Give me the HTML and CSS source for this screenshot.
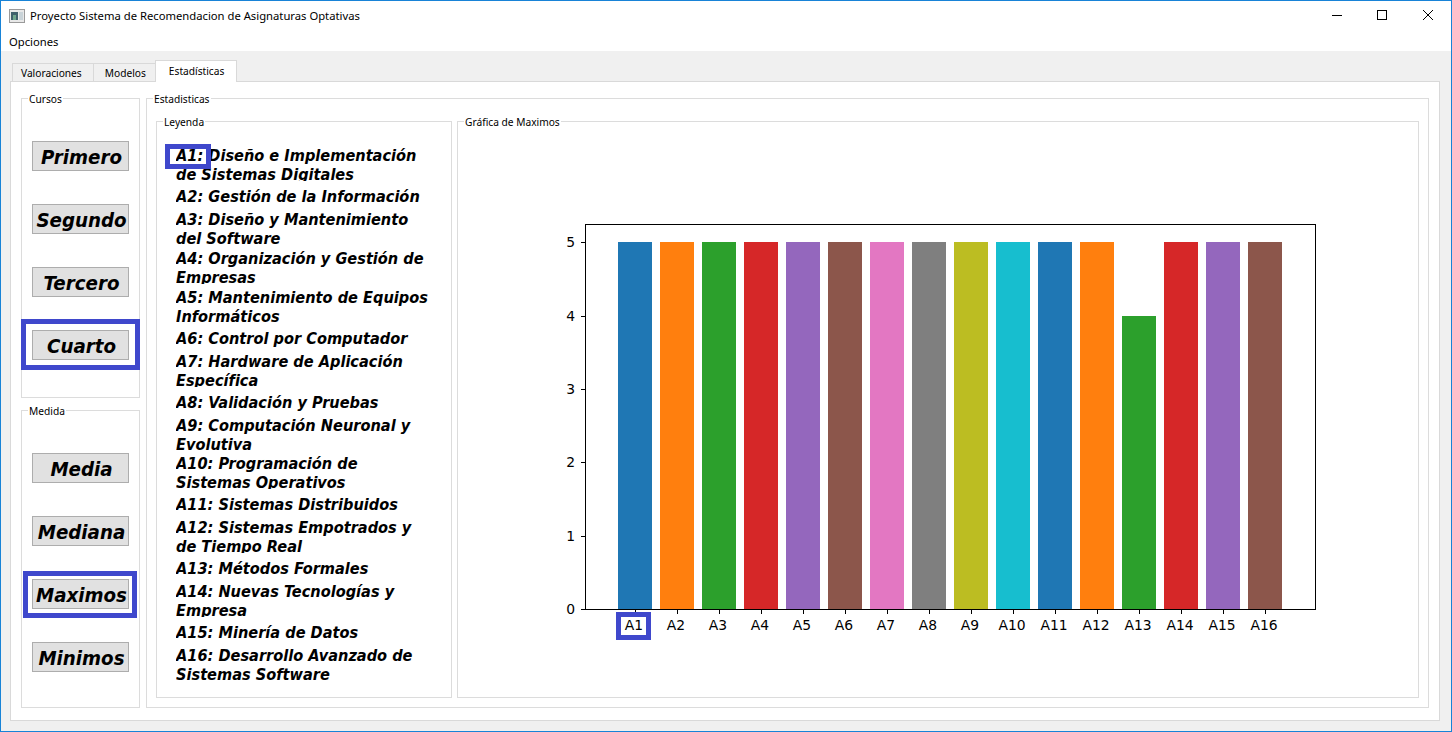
FILE: index.html
```html
<!DOCTYPE html>
<html lang="es">
<head>
  <meta charset="UTF-8">
  <title>Proyecto Sistema de Recomendacion de Asignaturas Optativas</title>
  <link rel="stylesheet" href="styles.css">
</head>
<body>
  <div class="window">
    <div class="titlebar">
      <svg class="app-icon" width="16" height="14" viewBox="0 0 16 14">
        <rect x="0.5" y="0.5" width="15" height="13" fill="#e8e8e8" stroke="#9a9a9a"/>
        <rect x="2" y="3" width="7" height="8" fill="#3f5f6b"/>
        <rect x="4" y="6" width="3" height="5" fill="#6fa58c"/>
        <rect x="10" y="3" width="4" height="8" fill="#c9d3d8"/>
      </svg>
      <span class="title">Proyecto Sistema de Recomendacion de Asignaturas Optativas</span>
      <div class="win-buttons">
        <svg width="10" height="10" viewBox="0 0 10 10"><path d="M0 5.5H10" stroke="#000" fill="none"/></svg>
        <svg width="10" height="10" viewBox="0 0 10 10"><rect x="0.5" y="0.5" width="9" height="9" stroke="#000" fill="none"/></svg>
        <svg class="win-close" width="10" height="10" viewBox="0 0 10 10"><path d="M0 0L10 10M10 0L0 10" stroke="#000" fill="none"/></svg>
      </div>
    </div>
    <div class="menubar">Opciones</div>

    <div class="content">
      <div class="tabs">
        <div class="tab">Valoraciones</div>
        <div class="tab tab-models">Modelos</div>
        <div class="tab active">Estadísticas</div>
      </div>
      <div class="pane">
        <div class="left-col">
          <div class="group btn-group cursos">
            <span class="group-title">Cursos</span>
            <button class="big-btn">Primero</button>
            <button class="big-btn">Segundo</button>
            <button class="big-btn">Tercero</button>
            <button class="big-btn">Cuarto</button>
          </div>
          <div class="group btn-group medida">
            <span class="group-title">Medida</span>
            <button class="big-btn">Media</button>
            <button class="big-btn">Mediana</button>
            <button class="big-btn">Maximos</button>
            <button class="big-btn">Minimos</button>
          </div>
        </div>

        <div class="group stats">
          <span class="group-title">Estadisticas</span>
          <div class="group legend">
            <span class="group-title">Leyenda</span>
            <div class="item two">A1: Diseño e Implementación<br>de Sistemas Digitales</div>
            <div class="item one">A2: Gestión de la Información</div>
            <div class="item two tight">A3: Diseño y Mantenimiento<br>del Software</div>
            <div class="item two tight">A4: Organización y Gestión de<br>Empresas</div>
            <div class="item two">A5: Mantenimiento de Equipos<br>Informáticos</div>
            <div class="item one">A6: Control por Computador</div>
            <div class="item two">A7: Hardware de Aplicación<br>Específica</div>
            <div class="item one">A8: Validación y Pruebas</div>
            <div class="item two tighter">A9: Computación Neuronal y<br>Evolutiva</div>
            <div class="item two">A10: Programación de<br>Sistemas Operativos</div>
            <div class="item one">A11: Sistemas Distribuidos</div>
            <div class="item two">A12: Sistemas Empotrados y<br>de Tiempo Real</div>
            <div class="item one">A13: Métodos Formales</div>
            <div class="item two">A14: Nuevas Tecnologías y<br>Empresa</div>
            <div class="item one">A15: Minería de Datos</div>
            <div class="item two">A16: Desarrollo Avanzado de<br>Sistemas Software</div>
          </div>
          <div class="group chart">
            <span class="group-title">Gráfica de Maximos</span>
            <!-- viewBox in window coordinates, easier to check against the plot -->
            <svg class="plot" viewBox="458 122 960 575" width="960" height="575">
              <g>
                <rect x="618" y="242" width="34" height="367" fill="#1f77b4"/>
                <rect x="660" y="242" width="34" height="367" fill="#ff7f0e"/>
                <rect x="702" y="242" width="34" height="367" fill="#2ca02c"/>
                <rect x="744" y="242" width="34" height="367" fill="#d62728"/>
                <rect x="786" y="242" width="34" height="367" fill="#9467bd"/>
                <rect x="828" y="242" width="34" height="367" fill="#8c564b"/>
                <rect x="870" y="242" width="34" height="367" fill="#e377c2"/>
                <rect x="912" y="242" width="34" height="367" fill="#7f7f7f"/>
                <rect x="954" y="242" width="34" height="367" fill="#bcbd22"/>
                <rect x="996" y="242" width="34" height="367" fill="#17becf"/>
                <rect x="1038" y="242" width="34" height="367" fill="#1f77b4"/>
                <rect x="1080" y="242" width="34" height="367" fill="#ff7f0e"/>
                <rect x="1122" y="316" width="34" height="293" fill="#2ca02c"/>
                <rect x="1164" y="242" width="34" height="367" fill="#d62728"/>
                <rect x="1206" y="242" width="34" height="367" fill="#9467bd"/>
                <rect x="1248" y="242" width="34" height="367" fill="#8c564b"/>
              </g>
              <rect x="585.5" y="224.5" width="730" height="385" fill="none" stroke="#000"/>
              <path class="ticks" d="M581 609.5H585M581 536.5H585M581 462.5H585M581 389.5H585M581 316.5H585M581 242.5H585
                M635.5 610V614M677.5 610V614M719.5 610V614M761.5 610V614M803.5 610V614M845.5 610V614M887.5 610V614M929.5 610V614
                M971.5 610V614M1013.5 610V614M1055.5 610V614M1097.5 610V614M1139.5 610V614M1181.5 610V614M1223.5 610V614M1265.5 610V614"/>
              <g class="y-labels">
                <text x="575" y="614">0</text>
                <text x="575" y="541">1</text>
                <text x="575" y="467">2</text>
                <text x="575" y="394">3</text>
                <text x="575" y="321">4</text>
                <text x="575" y="247">5</text>
              </g>
              <g class="x-labels">
                <text x="634" y="630">A1</text>
                <text x="676" y="630">A2</text>
                <text x="718" y="630">A3</text>
                <text x="760" y="630">A4</text>
                <text x="802" y="630">A5</text>
                <text x="844" y="630">A6</text>
                <text x="886" y="630">A7</text>
                <text x="928" y="630">A8</text>
                <text x="970" y="630">A9</text>
                <text x="1012" y="630">A10</text>
                <text x="1054" y="630">A11</text>
                <text x="1096" y="630">A12</text>
                <text x="1138" y="630">A13</text>
                <text x="1180" y="630">A14</text>
                <text x="1222" y="630">A15</text>
                <text x="1264" y="630">A16</text>
              </g>
            </svg>
          </div>
        </div>
      </div>
    </div>

    <div class="mark mark-a1"></div>
    <div class="mark mark-cuarto"></div>
    <div class="mark mark-maximos"></div>
    <div class="mark mark-tick"></div>
  </div>
</body>
</html>
```

FILE: styles.css
```css
* {
  box-sizing: border-box;
}
body {
  margin: 0;
  font-family: "Noto Sans", "Open Sans", sans-serif;
  font-size: 10.2px;
  color: #000;
  background: #fff;
}
.window {
  position: relative;
  width: 1452px;
  height: 732px;
  border: 1px solid #1883d7;
  display: flex;
  flex-direction: column;
  overflow: hidden;
}
.titlebar {
  height: 30px;
  flex: none;
  display: flex;
  align-items: center;
  padding-left: 8px;
  background: #fff;
}
.app-icon {
  margin-right: 5px;
}
.title {
  font-size: 11.25px;
  margin-bottom: 2px;
}
.win-buttons {
  margin-left: auto;
  margin-bottom: 2px;
  display: flex;
  gap: 35px;
  padding-right: 18px;
}
.win-close {
  margin-left: 1px;
}
.menubar {
  height: 20px;
  flex: none;
  padding: 1px 0 0 8px;
  line-height: 20px;
  font-size: 11.25px;
  background: #fff;
}
.content {
  flex: 1;
  background: #f0f0f0;
  padding: 10px 11px 10px 9px;
  display: flex;
  flex-direction: column;
}
.tabs {
  height: 20px;
  flex: none;
  display: flex;
  align-items: flex-end;
  padding-left: 2px;
  position: relative;
  z-index: 1;
}
.tab {
  height: 18px;
  padding: 0 11px 0 8px;
  line-height: 18px;
  background: #f0f0f0;
  border: 1px solid #d9d9d9;
  border-bottom: none;
  margin-right: -1px;
}
.tab-models {
  padding: 0 9px 0 11px;
}
.tab.active {
  height: 22px;
  margin-bottom: -1px;
  line-height: 21px;
  padding: 0 12px 0 13px;
  background: #fff;
}
.pane {
  flex: 1;
  display: flex;
  gap: 6px;
  background: #fff;
  border: 1px solid #d9d9d9;
  padding: 16px 10px 12px 10px;
}
.left-col {
  width: 119px;
  flex: none;
  display: flex;
  flex-direction: column;
  gap: 12px;
}
.group {
  position: relative;
  border: 1px solid #dcdcdc;
}
.group-title {
  position: absolute;
  top: -6px;
  left: 6px;
  padding: 0 1px;
  line-height: 13px;
  background: #fff;
  white-space: nowrap;
}
.btn-group {
  display: flex;
  flex-direction: column;
  align-items: flex-start;
  gap: 33px;
  padding: 42px 0 0 10px;
}
.cursos {
  height: 300px;
}
.medida {
  flex: 1;
}
.big-btn {
  width: 97px;
  height: 30px;
  padding: 2px 0 0 2px;
  background: #e1e1e1;
  border: 1px solid #adadad;
  font-family: "DejaVu Sans Condensed", "DejaVu Sans", sans-serif;
  font-stretch: condensed;
  font-size: 20.3px;
  font-weight: bold;
  font-style: italic;
  color: #000;
  white-space: nowrap;
}
.stats {
  flex: 1;
  display: flex;
  gap: 5px;
  padding: 22px 9px 9px 9px;
}
.legend {
  width: 296px;
  flex: none;
  padding: 24px 0 0 19px;
  font-family: "DejaVu Sans Condensed", "DejaVu Sans", sans-serif;
  font-stretch: condensed;
  font-size: 16.2px;
  font-weight: bold;
  font-style: italic;
  line-height: 19px;
}
.legend .group-title {
  font-family: "Noto Sans", "Open Sans", sans-serif;
  font-stretch: normal;
  font-size: 10.2px;
  font-weight: normal;
  font-style: normal;
}
.item {
  overflow: hidden;
  white-space: nowrap;
}
.item.one {
  height: 19px;
  margin-bottom: 4px;
}
.item.two {
  height: 35px;
  margin-bottom: 6px;
}
.item.two.tight {
  margin-bottom: 4px;
}
.item.two.tighter {
  margin-bottom: 3px;
}
.chart {
  flex: 1;
}
.plot {
  display: block;
}
.ticks {
  stroke: #000;
  fill: none;
}
.plot text {
  font-family: "DejaVu Sans", sans-serif;
  font-size: 13.9px;
  fill: #000;
}
.y-labels text {
  text-anchor: end;
}
.x-labels text {
  text-anchor: middle;
}
.mark {
  position: absolute;
  border: 5px solid #3f48cc;
}
.mark-a1 {
  left: 164px;
  top: 143px;
  width: 46px;
  height: 25px;
}
.mark-cuarto {
  left: 20px;
  top: 318px;
  width: 119px;
  height: 51px;
}
.mark-maximos {
  left: 22px;
  top: 570px;
  width: 114px;
  height: 47px;
}
.mark-tick {
  left: 615px;
  top: 611px;
  width: 35px;
  height: 28px;
}
```
